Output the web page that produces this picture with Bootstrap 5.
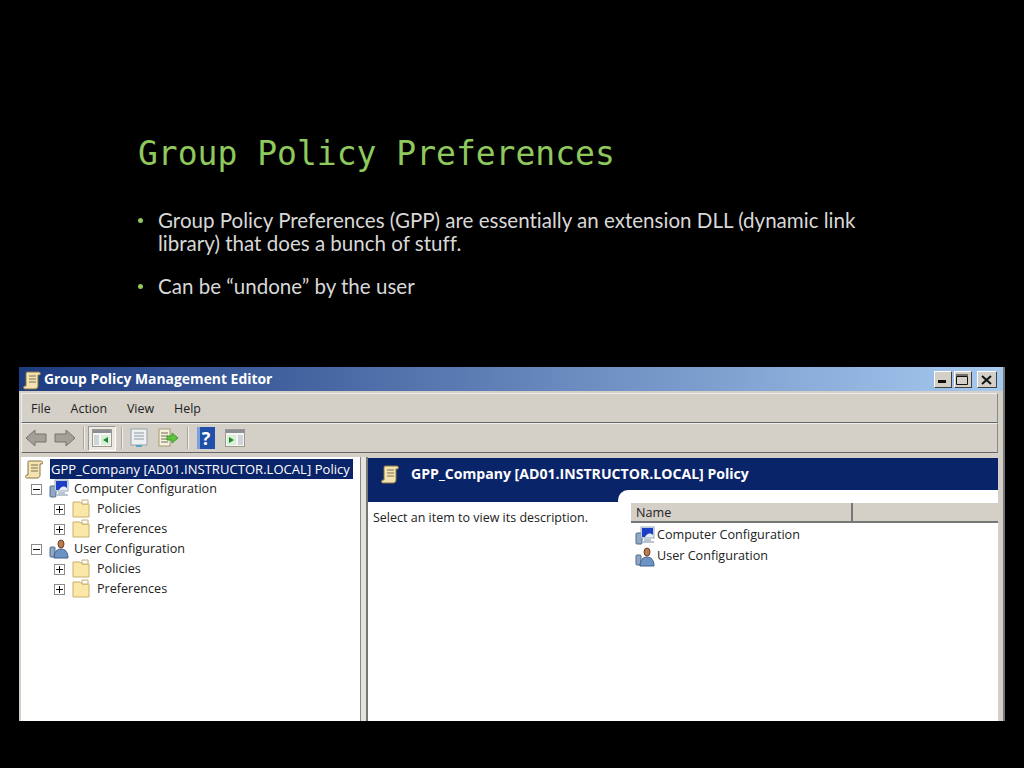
<!DOCTYPE html>
<html lang="en">
<head>
<meta charset="UTF-8">
<title>Group Policy Preferences</title>
<link href="https://cdn.jsdelivr.net/npm/bootstrap@5.3.3/dist/css/bootstrap.min.css" rel="stylesheet">
<style>
html, body { height: 100%; }
body { width: 1024px; height: 768px; overflow: hidden; background: #000; font-family: "Liberation Sans", sans-serif; }
.slide-head { height: 367px; padding: 131px 0 0 138px; }
.slide-title { font-family: "DejaVu Sans Mono", monospace; font-size: 33px; line-height: 46px; color: #8fc85c; margin: 0 0 32px; font-weight: 400; }
.slide-points { font-family: "Lato", sans-serif; font-size: 20.55px; line-height: 23px; color: #d8d8d8; width: 730px; font-variant-ligatures: none; }
.slide-points li { display: flex; margin-bottom: 20px; }
.slide-points li::before { content: ""; flex: none; width: 5px; height: 5px; margin: 9px 15px 0 0; border-radius: 50%; background: #8fc85c; }
.gpo-window { width: 986px; height: 354px; margin-left: 19px; background: #d4d0c8; border-right: 2px solid #777; font-family: "Open Sans", sans-serif; font-size: 12.6px; color: #222; overflow: hidden; }
.gpo-titlebar { height: 24px; background: linear-gradient(to right, #1c3b80, #a6caf0); color: #fff; font-weight: 700; font-size: 13.9px; padding: 1px 6px 0 3px; }
.gpo-titlebar svg { margin-right: 2px; }
.win-btn { width: 18px; height: 17px; margin-left: 2px; background: #d4d0c8; border: 1px solid; border-color: #fff #404040 #404040 #fff; }
.win-close { width: 20px; margin-left: 5px; }
.gpo-menu { height: 30px; margin: 2px 5px 0 2px; padding: 2px 0 0 9px; gap: 20px; border: 1px solid; border-color: #eee #888 #666 #eee; font-size: 12.4px; }
.gpo-tools { height: 30px; margin: 0 5px 0 2px; padding-left: 3px; border: 1px solid; border-color: #eee #888 #666 #eee; }
.tool-sep { width: 2px; height: 22px; background: #a9a59d; border-right: 1px solid #f4f2ee; flex: none; }
.tool-on { width: 28px; height: 25px; background: #ece9e2; border: 1px solid; border-color: #999 #fff #fff #999; }
.gap-l3 { margin-left: 3px; }
.gap-l5 { margin-left: 5px; }
.gap-l7 { margin-left: 7px; }
.gap-l8 { margin-left: 8px; }
.gap-l9 { margin-left: 9px; }
.gap-l10 { margin-left: 10px; }
.help-mark { font-size: 18px; line-height: 22px; }
.gpo-panes { height: 264px; margin-top: 4px; }
.gpo-tree { width: 340px; margin-left: 2px; background: #fff; padding: 2px 0 0 3px; border-right: 1px solid #888; }
.tree-row { height: 20px; white-space: nowrap; }
.tree-sel { background: #0a246a; color: #fff; margin-left: 6px; padding: 1px 3px 0 1px; width: 303px; height: 20px; white-space: nowrap; font-size: 13px; letter-spacing: .05px; }
.tree-d1 { padding-left: 7px; }
.tree-d1 svg.node-ic { margin-left: 2px; }
.tree-d2 { padding-left: 30px; }
.tree-box { width: 11px; height: 11px; border: 1px solid #8a8a8a; background: #fff; margin-right: 5px; flex: none; }
.tree-d2 .tree-box { margin-right: 6px; }
.tree-lbl { margin-left: 5px; }
.tree-d2 .tree-lbl { margin-left: 6px; }
.gpo-splitter { width: 7px; background: #e4e2dc; border-right: 2px solid #777; }
.gpo-detail { width: 630px; background: #fff; border-top: 1px solid #d4d0c8; }
.detail-head { height: 32px; flex: none; background: #0a246a; color: #fff; font-weight: 700; font-size: 14.1px; padding-left: 12px; }
.detail-head svg { margin-right: 11px; }
.detail-desc { width: 250px; }
.detail-strip { height: 12px; background: #0a246a; }
.detail-text { padding: 7px 0 0 5px; font-size: 12.5px; }
.detail-list { background: #0a246a; }
.detail-inner { background: #fff; border-top-left-radius: 10px; height: 100%; padding: 13px 0 0 13px; }
.list-head { height: 20px; background: #d4d0c8; border-bottom: 2px solid #777; }
.list-name { width: 222px; padding: 1px 0 0 5px; border-right: 2px solid #777; }
.list-first { margin-top: 2px; }
.list-item { height: 21px; padding-left: 4px; white-space: nowrap; }
.list-item svg { margin-right: 2px; }
</style>
</head>
<body>
<svg width="0" height="0" class="position-absolute">
  <symbol id="ic-scroll" viewBox="0 0 20 20">
    <path d="M5 2h12c1 0 2 1 1 3h-2v11c0 2-1 3-3 3H3c-2 0-2-3 0-3h1V4c0-1 0-2 1-2z" fill="#f3e3b0" stroke="#8a7440"/>
    <path d="M7 6h7M7 9h7M7 12h7" stroke="#7d7256" fill="none"/>
  </symbol>
  <symbol id="ic-computer" viewBox="0 0 20 20">
    <rect x="1" y="7" width="6" height="11" rx="1" fill="#8fa9c4" stroke="#4f6b88"/>
    <rect x="6" y="1" width="13" height="11" fill="#e4ecf6" stroke="#9ab"/>
    <path d="M7 2h11v7c-4-3-6-1-8 2H7z" fill="#1c3fc4"/>
    <path d="M9 13h7v2h3v2H7v-2h2z" fill="#b8c4d0"/>
  </symbol>
  <symbol id="ic-user" viewBox="0 0 20 20">
    <rect x="1" y="8" width="5" height="10" rx="1" fill="#8fa9c4" stroke="#4f6b88"/>
    <ellipse cx="12" cy="5" rx="3" ry="4" fill="#b97a4e" stroke="#6b4328"/>
    <path d="M5 19c0-6 3-9 7-9s7 3 7 9z" fill="#6d93c4" stroke="#3f5f88"/>
  </symbol>
  <symbol id="ic-folder" viewBox="0 0 20 20">
    <path d="M2 3h7l2 2h7v13H2z" fill="#fbe7a8" stroke="#c9b06c"/>
    <path d="M11 1h6v4h-6z" fill="#fff" stroke="#c9b06c"/>
  </symbol>
  <symbol id="ic-back" viewBox="0 0 22 18">
    <path d="M1 9l9-8v4h11v8H10v4z" fill="#a3a098" stroke="#77756e"/>
  </symbol>
  <symbol id="ic-fwd" viewBox="0 0 22 18">
    <path d="M21 9l-9-8v4H1v8h11v4z" fill="#a3a098" stroke="#77756e"/>
  </symbol>
  <symbol id="ic-pane-l" viewBox="0 0 20 18">
    <rect x="0.5" y="0.5" width="19" height="17" fill="#f6f5f1" stroke="#9a988f"/>
    <path d="M1 1h18v3H1z" fill="#8a8f96"/>
    <path d="M2 6h5v10H2z" fill="#cfd4da"/>
    <path d="M9 6h9v10H9z" fill="#d8efd8"/>
    <path d="M16 8l-5 3 5 3z" fill="#1f8a2c"/>
  </symbol>
  <symbol id="ic-pane-r" viewBox="0 0 20 18">
    <rect x="0.5" y="0.5" width="19" height="17" fill="#f6f5f1" stroke="#9a988f"/>
    <path d="M1 1h18v3H1z" fill="#8a8f96"/>
    <path d="M13 6h5v10h-5z" fill="#cfd4da"/>
    <path d="M2 6h9v10H2z" fill="#d8efd8"/>
    <path d="M4 8l5 3-5 3z" fill="#1f8a2c"/>
  </symbol>
  <symbol id="ic-sheet" viewBox="0 0 18 20">
    <rect x="1" y="1" width="16" height="16" fill="#eef1f2" stroke="#93a0a8"/>
    <path d="M4 5h10M4 8h10M4 11h10" stroke="#8b98a0"/>
    <path d="M6 18h6" stroke="#5aa6c8" stroke-width="2"/>
  </symbol>
  <symbol id="ic-export" viewBox="0 0 20 20">
    <rect x="1" y="1" width="11" height="17" fill="#f7f3df" stroke="#a39a70"/>
    <path d="M3 5h7M3 8h7M3 11h7M3 14h7" stroke="#6f6a52"/>
    <path d="M9 8h5V5l6 5-6 5v-3H9z" fill="#5fc23f" stroke="#3f9a2a"/>
  </symbol>
  <symbol id="ic-help" viewBox="0 0 18 22">
    <rect width="18" height="22" fill="#1f4fa8"/>
    <path d="M0 0h3v22H0z" fill="#7da0dc"/>
  </symbol>
  <symbol id="ic-plus" viewBox="0 0 7 7"><path d="M0 3.500h7M3.500 0v7" stroke="#111"/></symbol>
  <symbol id="ic-minus" viewBox="0 0 7 7"><path d="M0 3.500h7" stroke="#111"/></symbol>
</svg>

<header class="slide-head">
  <h1 class="slide-title">Group Policy Preferences</h1>
  <ul class="slide-points list-unstyled mb-0">
    <li><span>Group Policy Preferences (GPP) are essentially an extension DLL (dynamic link library) that does a bunch of stuff.</span></li>
    <li><span>Can be “undone” by the user</span></li>
  </ul>
</header>

<div class="gpo-window">
  <div class="gpo-titlebar d-flex align-items-center">
    <svg width="20" height="20"><use href="#ic-scroll"/></svg>
    <span>Group Policy Management Editor</span>
    <div class="d-flex ms-auto">
      <div class="win-btn d-flex align-items-end justify-content-center pb-1"><svg width="8" height="3"><rect width="8" height="3" fill="#111"/></svg></div>
      <div class="win-btn d-flex align-items-center justify-content-center"><svg width="12" height="11"><path d="M.5 2.500h11v8H.5zM0 1h12" fill="none" stroke="#111"/></svg></div>
      <div class="win-btn win-close d-flex align-items-center justify-content-center"><svg width="11" height="10"><path d="M1 1l9 8M10 1l-9 8" stroke="#111" stroke-width="2"/></svg></div>
    </div>
  </div>

  <nav class="gpo-menu d-flex align-items-center">
    <span>File</span><span>Action</span><span>View</span><span>Help</span>
  </nav>

  <div class="gpo-tools d-flex align-items-center">
    <svg width="22" height="18"><use href="#ic-back"/></svg>
    <svg class="gap-l7" width="22" height="18"><use href="#ic-fwd"/></svg>
    <div class="tool-sep gap-l7"></div>
    <div class="tool-on gap-l3 d-flex align-items-center justify-content-center"><svg width="20" height="18"><use href="#ic-pane-l"/></svg></div>
    <div class="tool-sep gap-l5"></div>
    <svg class="gap-l7" width="18" height="20"><use href="#ic-sheet"/></svg>
    <svg class="gap-l10" width="20" height="20"><use href="#ic-export"/></svg>
    <div class="tool-sep gap-l9"></div>
    <div class="gap-l8 d-flex position-relative">
      <svg width="18" height="22"><use href="#ic-help"/></svg>
      <span class="help-mark position-absolute text-white fw-bold top-0 start-50 translate-middle-x">?</span>
    </div>
    <svg class="gap-l10" width="20" height="18"><use href="#ic-pane-r"/></svg>
  </div>

  <div class="gpo-panes d-flex">
    <div class="gpo-tree">
      <div class="tree-row d-flex align-items-center">
        <svg width="20" height="20"><use href="#ic-scroll"/></svg>
        <div class="tree-sel d-flex align-items-center">GPP_Company [AD01.INSTRUCTOR.LOCAL] Policy</div>
      </div>
      <div class="tree-row tree-d1 d-flex align-items-center">
        <span class="tree-box d-flex align-items-center justify-content-center"><svg width="7" height="7"><use href="#ic-minus"/></svg></span>
        <svg class="node-ic" width="20" height="20"><use href="#ic-computer"/></svg>
        <span class="tree-lbl">Computer Configuration</span>
      </div>
      <div class="tree-row tree-d2 d-flex align-items-center">
        <span class="tree-box d-flex align-items-center justify-content-center"><svg width="7" height="7"><use href="#ic-plus"/></svg></span>
        <svg width="20" height="20"><use href="#ic-folder"/></svg>
        <span class="tree-lbl">Policies</span>
      </div>
      <div class="tree-row tree-d2 d-flex align-items-center">
        <span class="tree-box d-flex align-items-center justify-content-center"><svg width="7" height="7"><use href="#ic-plus"/></svg></span>
        <svg width="20" height="20"><use href="#ic-folder"/></svg>
        <span class="tree-lbl">Preferences</span>
      </div>
      <div class="tree-row tree-d1 d-flex align-items-center">
        <span class="tree-box d-flex align-items-center justify-content-center"><svg width="7" height="7"><use href="#ic-minus"/></svg></span>
        <svg class="node-ic" width="20" height="20"><use href="#ic-user"/></svg>
        <span class="tree-lbl">User Configuration</span>
      </div>
      <div class="tree-row tree-d2 d-flex align-items-center">
        <span class="tree-box d-flex align-items-center justify-content-center"><svg width="7" height="7"><use href="#ic-plus"/></svg></span>
        <svg width="20" height="20"><use href="#ic-folder"/></svg>
        <span class="tree-lbl">Policies</span>
      </div>
      <div class="tree-row tree-d2 d-flex align-items-center">
        <span class="tree-box d-flex align-items-center justify-content-center"><svg width="7" height="7"><use href="#ic-plus"/></svg></span>
        <svg width="20" height="20"><use href="#ic-folder"/></svg>
        <span class="tree-lbl">Preferences</span>
      </div>
    </div>
    <div class="gpo-splitter"></div>
    <div class="gpo-detail d-flex flex-column">
      <div class="detail-head d-flex align-items-center">
        <svg width="20" height="20"><use href="#ic-scroll"/></svg>
        <span>GPP_Company [AD01.INSTRUCTOR.LOCAL] Policy</span>
      </div>
      <div class="d-flex flex-grow-1">
        <div class="detail-desc">
          <div class="detail-strip"></div>
          <div class="detail-text">Select an item to view its description.</div>
        </div>
        <div class="detail-list flex-grow-1">
          <div class="detail-inner">
            <div class="list-head d-flex">
              <div class="list-name">Name</div>
            </div>
            <div class="list-item list-first d-flex align-items-center"><svg width="20" height="20"><use href="#ic-computer"/></svg>Computer Configuration</div>
            <div class="list-item d-flex align-items-center"><svg width="20" height="20"><use href="#ic-user"/></svg>User Configuration</div>
          </div>
        </div>
      </div>
    </div>
  </div>
</div>
</body>
</html>
